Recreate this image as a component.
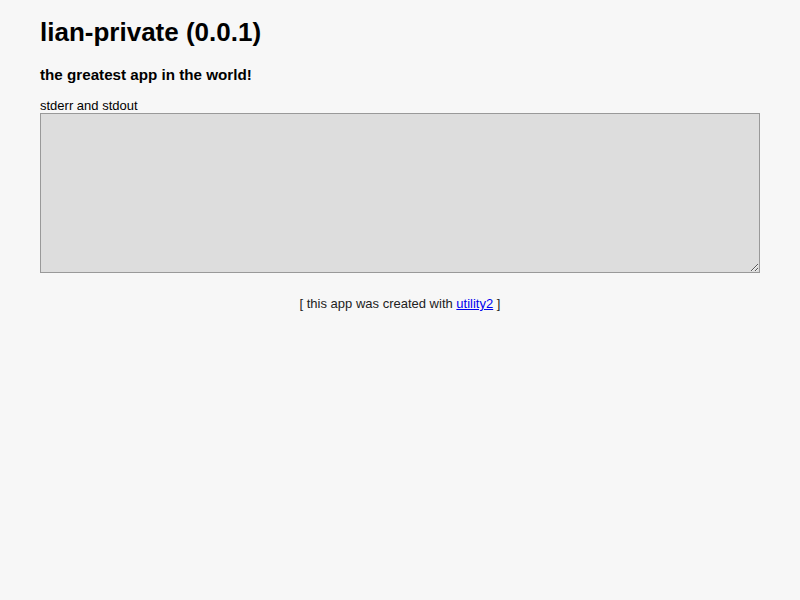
export default function App() {
  return (
    <div
      className="min-h-screen bg-[#f7f7f7] px-[40px] text-black"
      style={{ fontFamily: '"Liberation Sans", Arial, sans-serif' }}
    >
      <h1 className="pt-[16px] text-[26px] font-bold leading-[32px]">lian-private (0.0.1)</h1>
      <h3 className="mt-[18px] text-[15.2px] font-bold leading-[18px]">the greatest app in the world!</h3>
      <label className="mt-[14px] block text-[13px] leading-[15px]">stderr and stdout</label>
      <textarea
        readOnly
        className="block h-[160px] w-full resize-y border border-[#999] bg-[#ddd] p-[2px] text-[13px] outline-none"
      />
      <div className="mt-[23px] text-center text-[13px] leading-[15px] text-[#222]">
        [ this app was created with{" "}
        <a href="#" className="text-[#0000ee] underline">
          utility2
        </a>{" "}
        ]
      </div>
    </div>
  );
}
